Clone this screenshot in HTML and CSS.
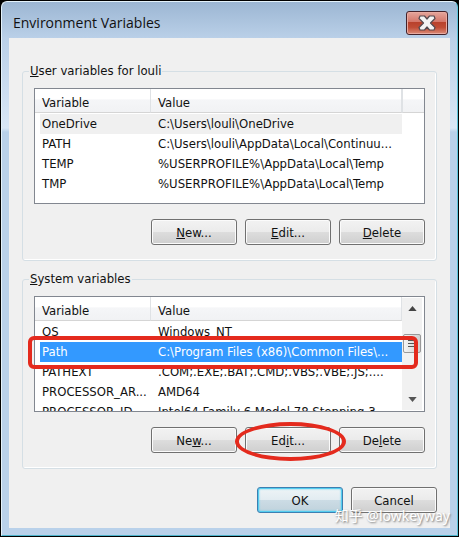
FILE: index.html
```html
<!DOCTYPE html>
<html lang="en">
<head>
  <meta charset="UTF-8">
  <meta name="viewport" content="width=device-width, initial-scale=1.0">
  <title>Environment Variables</title>
  <link rel="stylesheet" href="styles.css">
</head>
<body>

  <div class="window">
    <header class="title-bar">
      <h1>Environment Variables</h1>
      <button class="close-btn" aria-label="Close">
        <svg width="18" height="16" viewBox="0 0 18 16">
          <path d="M2 1h4.500L9 4l2.500-3H16l1 2.500L12.500 8l4.500 4.500L16 15h-4.500L9 12l-2.500 3H2l-1-2.500L5.500 8 1 3.500z" fill="#f4f4f4" stroke="#544a50" stroke-width="1.2" stroke-linejoin="round"/>
        </svg>
      </button>
    </header>

    <main class="client">
      <fieldset class="group">
        <legend><u>U</u>ser variables for louli</legend>
        <div class="list">
          <div class="list-view">
            <table>
              <thead>
                <tr><th class="col-name">Variable</th><th>Value</th></tr>
              </thead>
              <tbody>
                <tr class="current"><td>OneDrive</td><td>C:\Users\louli\OneDrive</td></tr>
                <tr><td>PATH</td><td>C:\Users\louli\AppData\Local\Continuu...</td></tr>
                <tr><td>TEMP</td><td>%USERPROFILE%\AppData\Local\Temp</td></tr>
                <tr><td>TMP</td><td>%USERPROFILE%\AppData\Local\Temp</td></tr>
              </tbody>
            </table>
            <div class="header-end"></div>
          </div>
        </div>
        <div class="buttons">
          <button class="btn"><u>N</u>ew...</button>
          <button class="btn"><u>E</u>dit...</button>
          <button class="btn"><u>D</u>elete</button>
        </div>
      </fieldset>

      <fieldset class="group">
        <legend><u>S</u>ystem variables</legend>
        <div class="list">
          <div class="list-view">
            <table>
              <thead>
                <tr><th class="col-name">Variable</th><th>Value</th></tr>
              </thead>
              <tbody>
                <tr><td>OS</td><td>Windows_NT</td></tr>
                <tr class="selected"><td>Path</td><td>C:\Program Files (x86)\Common Files\...</td></tr>
                <tr><td>PATHEXT</td><td>.COM;.EXE;.BAT;.CMD;.VBS;.VBE;.JS;....</td></tr>
                <tr><td>PROCESSOR_AR...</td><td>AMD64</td></tr>
                <tr><td>PROCESSOR_ID...</td><td>Intel64 Family 6 Model 78 Stepping 3...</td></tr>
              </tbody>
            </table>
            <div class="scrollbar">
              <svg width="9" height="5" viewBox="0 0 10 6"><path d="M5 0l5 6H0z" fill="#444"/></svg>
              <div class="thumb"></div>
              <svg class="arrow-down" width="9" height="5" viewBox="0 0 10 6"><path d="M0 0h10L5 6z" fill="#555"/></svg>
            </div>
          </div>
          <div class="mark-row"></div>
        </div>
        <div class="buttons">
          <button class="btn">Ne<u>w</u>...</button>
          <div class="marked">
            <button class="btn">Ed<u>i</u>t...</button>
            <div class="mark-button"></div>
          </div>
          <button class="btn">De<u>l</u>ete</button>
        </div>
      </fieldset>

      <div class="buttons footer">
        <button class="btn default">OK</button>
        <button class="btn">Cancel</button>
      </div>
    </main>

    <div class="watermark">知乎 @lowkeyway</div>
  </div>

</body>
</html>
```
FILE: styles.css
```css
* {
  box-sizing: border-box;
}

body {
  margin: 0;
  background-color: #000;
  font-family: "DejaVu Sans Condensed", "Noto Sans", sans-serif;
  font-size: 13px;
  color: #111;
}

/* window frame */
.window {
  position: relative;
  margin: 1px;
  padding: 0 7px 7px;
  border: 1px solid #e4f2fb;
  border-right-color: #5cc5dc;
  border-bottom-color: #4db4cc;
  border-radius: 6px 6px 0 0;
  background: linear-gradient(#9cb6d3, #bad0e8 36px, #d9e7f6 126px, #b9d1ea 130px);
}

.title-bar {
  display: flex;
  justify-content: space-between;
  align-items: flex-start;
  height: 36px;
  padding: 9px 2px 0 4px;
}

.title-bar h1 {
  margin: 0;
  font-family: "Open Sans", sans-serif;
  font-size: 14px;
  font-weight: normal;
  line-height: 24px;
}

.close-btn {
  display: flex;
  justify-content: center;
  align-items: center;
  width: 42px;
  height: 24px;
  padding: 0;
  border: 1px solid #44222a;
  border-radius: 3px;
  box-shadow: inset 0 0 0 1px #e9aaa0;
  background: linear-gradient(#e5a69c, #d4776a 44%, #b8402b 45%, #c04c35 70%, #dc8c79);
}

.client {
  padding: 24px 13px 15px;
  background-color: #f0f0f0;
}

.group {
  min-width: 0;
  margin: 0 0 9px;
  padding: 8px 11px 15px;
  border: 1px solid #d5dfe5;
  border-radius: 3px;
  box-shadow: inset -1px -1px #fff;
}

.group legend {
  margin-left: -5px;
  padding: 0 1px;
  line-height: 18px;
}

/* variable lists */
.list {
  position: relative;
}

.list-view {
  display: flex;
  height: 116px;
  overflow: hidden;
  border: 1px solid #828790;
  background-color: #fff;
}

.list-view table {
  flex: 1;
  height: max-content;
  table-layout: fixed;
  border-collapse: separate;
  border-spacing: 0;
}

.list-view th {
  height: 24px;
  padding: 3px 7px 0;
  border-right: 1px solid #dfe2e5;
  border-bottom: 1px solid #d5d5d5;
  background: linear-gradient(#fff 45%, #f5f6f8 46%, #f1f2f4);
  font-weight: normal;
  text-align: left;
}

.list-view .col-name {
  width: 116px;
}

.list-view td {
  height: 20px;
  padding: 0 0 0 7px;
  line-height: 20px;
  white-space: nowrap;
}

/* rows start a little to the right of the list edge */
.list-view tbody tr {
  background: linear-gradient(#fff, #fff) left / 5px 100% no-repeat;
}

.list-view .current {
  background-color: #f0f0f0;
}

.list-view .selected {
  background-color: #3399ff;
  color: #fff;
}

.list-view tbody::before {
  content: "";
  display: block;
  height: 1px;
}

.header-end {
  width: 22px;
  height: 24px;
  border-left: 1px solid #dfe2e5;
  border-bottom: 1px solid #d5d5d5;
  background: linear-gradient(#fff 45%, #f5f6f8 46%, #f1f2f4);
}

.scrollbar {
  display: flex;
  flex-direction: column;
  align-items: center;
  width: 20px;
  margin: 1px 2px 1px 0;
  padding: 8px 0;
  background-color: #f1f1f1;
}

.thumb {
  width: 18px;
  height: 19px;
  margin-top: 23px;
  border: 1px solid #999;
  border-radius: 2px;
  background:
    repeating-linear-gradient(#555 0 1px, transparent 1px 3px) 4px 5px / 8px 7px no-repeat,
    linear-gradient(90deg, #f5f5f5, #cfcfcf);
}

.arrow-down {
  margin-top: auto;
}

.buttons {
  display: flex;
  justify-content: flex-end;
  gap: 8px;
  margin: 15px 0 0;
}

.btn {
  width: 86px;
  height: 26px;
  padding: 0;
  border: 1px solid #707070;
  border-radius: 3px;
  box-shadow: inset 0 0 0 1px #fbfbfb;
  background: linear-gradient(#f2f2f2, #ebebeb 49%, #dddddd 50%, #cfcfcf);
  font: inherit;
  color: #111;
}

.btn.default {
  border-color: #3c7fb1;
  box-shadow: inset 0 0 0 1px #54cdf0, inset 0 0 2px 1px #54cdf0;
  background: linear-gradient(#eef4f6, #e2ecf1 49%, #ccdce5 50%, #c0d2dc);
}

.footer {
  margin: 18px 0 0;
}

/* red highlights */
.mark-row {
  position: absolute;
  top: 40px;
  left: -6px;
  right: 7px;
  height: 33px;
  border: 4px solid #e42a1d;
  border-radius: 6px;
}

.marked {
  position: relative;
}

.mark-button {
  position: absolute;
  inset: -5px -15px -8px -10px;
  border: 4px solid #e42a1d;
  border-radius: 50%;
  pointer-events: none;
}

.watermark {
  position: absolute;
  right: 7px;
  bottom: 7px;
  font-family: "Noto Sans", "Noto Sans CJK SC", sans-serif;
  font-size: 14px;
  line-height: 24px;
  color: #fff;
  text-shadow: 1px 1px 2px #777;
}
```
